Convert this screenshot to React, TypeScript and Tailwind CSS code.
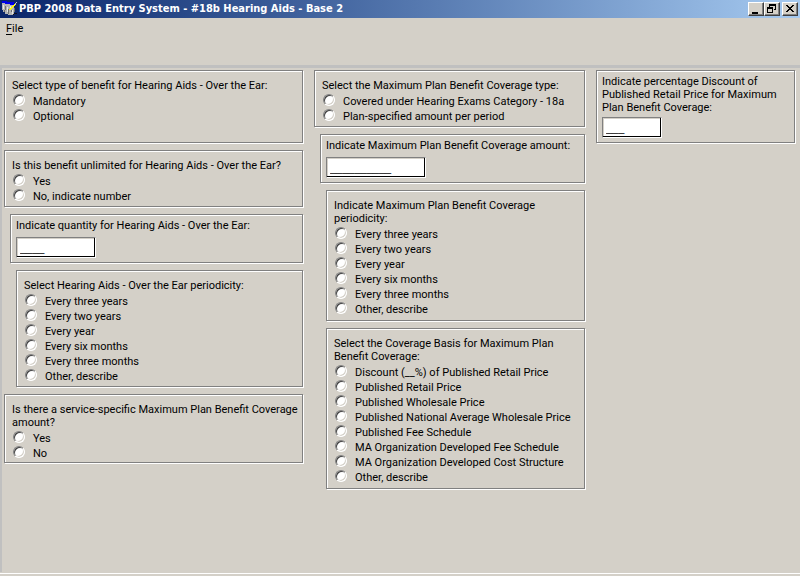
import { useId, type ReactNode } from "react";
import clsx from "clsx";

const everyPeriod = [
    "Every three years",
    "Every two years",
    "Every year",
    "Every six months",
    "Every three months",
    "Other, describe",
];

const coverageBasis = [
    "Discount (__%) of Published Retail Price",
    "Published Retail Price",
    "Published Wholesale Price",
    "Published National Average Wholesale Price",
    "Published Fee Schedule",
    "MA Organization Developed Fee Schedule",
    "MA Organization Developed Cost Structure",
    "Other, describe",
];

export default function App() {
    return (
        <div className="flex min-h-screen flex-col bg-[#d4d0c8] font-[Roboto,Arial,sans-serif] text-[11px] leading-[13px] text-black">
            <TitleBar />

            <nav className="h-[47px] shrink-0 px-[6px] pt-1">
                <button type="button" className="leading-[13px]">
                    <span className="underline underline-offset-2">F</span>ile
                </button>
            </nav>

            {/* Form area */}
            <main className="grid flex-1 grid-cols-[minmax(0,299fr)_minmax(0,271fr)_minmax(0,199fr)] items-start gap-[11px] border-t-[3px] border-l-2 border-[#c0c0c0] pt-[2px] pr-[5px] pl-[2px]">
                <div className="flex flex-col gap-[7px]">
                    <RadioGroup
                        title="Select type of benefit for Hearing Aids - Over the Ear:"
                        options={["Mandatory", "Optional"]}
                        className="pb-[19px]"
                    />
                    <RadioGroup
                        title="Is this benefit unlimited for Hearing Aids - Over the Ear?"
                        options={["Yes", "No, indicate number"]}
                    />
                    <InputGroup
                        title="Indicate quantity for Hearing Aids - Over the Ear:"
                        value="____"
                        className="ml-[6px]"
                        inputClassName="mt-[5px] w-20"
                    />
                    <RadioGroup
                        title="Select Hearing Aids - Over the Ear periodicity:"
                        options={everyPeriod}
                        className="ml-3"
                    />
                    <RadioGroup
                        title={<>Is there a service-specific Maximum Plan Benefit Coverage<br />amount?</>}
                        options={["Yes", "No"]}
                        className="pb-[2px]"
                    />
                </div>

                <div className="flex flex-col gap-[7px]">
                    <RadioGroup
                        title="Select the Maximum Plan Benefit Coverage type:"
                        options={["Covered under Hearing Exams Category - 18a", "Plan-specified amount per period"]}
                    />
                    <InputGroup
                        title="Indicate Maximum Plan Benefit Coverage amount:"
                        value="__________"
                        className="ml-[6px]"
                        inputClassName="mt-[5px] w-[100px]"
                    />
                    <RadioGroup
                        title={<>Indicate Maximum Plan Benefit Coverage<br />periodicity:</>}
                        options={everyPeriod}
                        className="ml-3 pb-1"
                    />
                    <RadioGroup
                        title={<>Select the Coverage Basis for Maximum Plan<br />Benefit Coverage:</>}
                        options={coverageBasis}
                        className="ml-3 pb-1"
                    />
                </div>

                <InputGroup
                    title={<>Indicate percentage Discount of<br />Published Retail Price for Maximum<br />Plan Benefit Coverage:</>}
                    value="___"
                    inputClassName="mt-[3px] w-[60px]"
                />
            </main>

            <footer className="mt-px h-[3px] shrink-0 border-t border-white" />
        </div>
    );
}

function TitleBar() {
    return (
        <header className="flex h-[18px] shrink-0 items-center bg-linear-to-r from-[#0a246a] to-[#a6caf0] pr-[2px] pl-[2px]">
            <AppIcon />
            <h1 className="ml-px flex-1 truncate font-['DejaVu_Sans_Condensed',Tahoma,sans-serif] text-[11px] leading-[18px] font-bold text-white">
                PBP 2008 Data Entry System - #18b Hearing Aids - Base 2
            </h1>
            <div className="flex">
                <WindowButton label="Minimize">
                    <path d="M3 9h6v2H3z" />
                </WindowButton>
                <WindowButton label="Restore">
                    <path d="M4 1h7v6H9V6h1V3H5v1H4zM2 4h6v6H2zm1 2v3h4V6z" fillRule="evenodd" />
                </WindowButton>
                <WindowButton label="Close" className="ml-[2px]">
                    <path d="M3 2h2v1h1v1h2V3h1V2h2v1h-1v1H9v1H8v1h1v1h1v1h1v1H9V8H8V7H6v1H5v1H3V8h1V7h1V6h1V5H5V4H4V3H3z" />
                </WindowButton>
            </div>
        </header>
    );
}

function WindowButton({ label, className, children }: { label: string; className?: string; children: ReactNode }) {
    return (
        <button
            type="button"
            aria-label={label}
            className={clsx(
                "h-[14px] w-4 border border-t-white border-r-[#404040] border-b-[#404040] border-l-white bg-[#d4d0c8] shadow-[inset_-1px_-1px_0_#808080]",
                className
            )}
        >
            <svg className="block" width="14" height="12" viewBox="0 0 14 12" fill="#000" shapeRendering="crispEdges">
                {children}
            </svg>
        </button>
    );
}

function AppIcon() {
    return (
        <svg width="16" height="16" viewBox="0 0 16 16" shapeRendering="crispEdges" aria-hidden="true">
            <path d="M0 2h3v1h9v11H6v-1H3v-2H1V9H0z" fill="#b4b4b4" />
            <path d="M1 4h1v4H1zM5 6h1v5H5zM8 5h1v3H8zM10 9h1v4h-1z" fill="#e8e8e8" />
            <path d="M3 5h1v4H3zM6 8h1v5H6zM2 9h1v2H2zM9 9h1v2H9zM12 7h1v4h-1z" fill="#707070" />
            <path d="M0 0h5v1h7v3H8V3H3V2H0z" fill="#0000e8" />
            <path d="M12 3h1v2h-1v1h-1v1h-1v1H9v1H7V8h1V7h1V6h1V5h1V4h1z" fill="#ffff00" />
            <path d="M14 1h1v1h-1v2h-1V2h1z" fill="#c0c0c0" />
            <path d="M12 12h3v1h-3v1h-1v-1h1z" fill="#101020" />
        </svg>
    );
}

// Etched group frame
const frame =
    "border border-[#808080] shadow-[1px_1px_0_#fff,inset_1px_1px_0_#fff]";

type RadioGroupProps = { title: ReactNode; options: string[]; className?: string };

function RadioGroup({ title, options, className = "" }: RadioGroupProps) {
    const id = useId();

    return (
        <div
            role="radiogroup"
            aria-labelledby={id}
            className={clsx(frame, "px-[7px] pt-2", !className.includes("pb-") && "pb-[3px]", className)}
        >
            <p id={id} className="mb-px whitespace-nowrap">{title}</p>
            {options.map((option) => (
                <label key={option} className="flex h-[15px] items-start gap-2 pl-px whitespace-nowrap">
                    <input
                        type="radio"
                        name={id}
                        className="mt-px size-3 shrink-0 appearance-none rounded-full border border-t-[#808080] border-r-white border-b-white border-l-[#808080] bg-white shadow-[inset_1px_1px_0_#404040,inset_-1px_-1px_0_#d4d0c8] checked:bg-black"
                    />
                    <span className="pt-px leading-[15px]">{option}</span>
                </label>
            ))}
        </div>
    );
}

type InputGroupProps = { title: ReactNode; value: string; className?: string; inputClassName: string };

function InputGroup({ title, value, className, inputClassName }: InputGroupProps) {
    const id = useId();

    return (
        <div className={clsx(frame, "px-[5px] py-1", className)}>
            <label htmlFor={id} className="block whitespace-nowrap">{title}</label>
            <input
                id={id}
                type="text"
                defaultValue={value}
                className={clsx(
                    "block h-[21px] border border-t-[#808080] border-r-white border-b-white border-l-[#808080] bg-white px-[3px] font-['Liberation_Sans',Arial,sans-serif] shadow-[inset_-1px_-1px_0_#000,inset_1px_1px_0_#d4d0c8] outline-none",
                    inputClassName
                )}
            />
        </div>
    );
}
